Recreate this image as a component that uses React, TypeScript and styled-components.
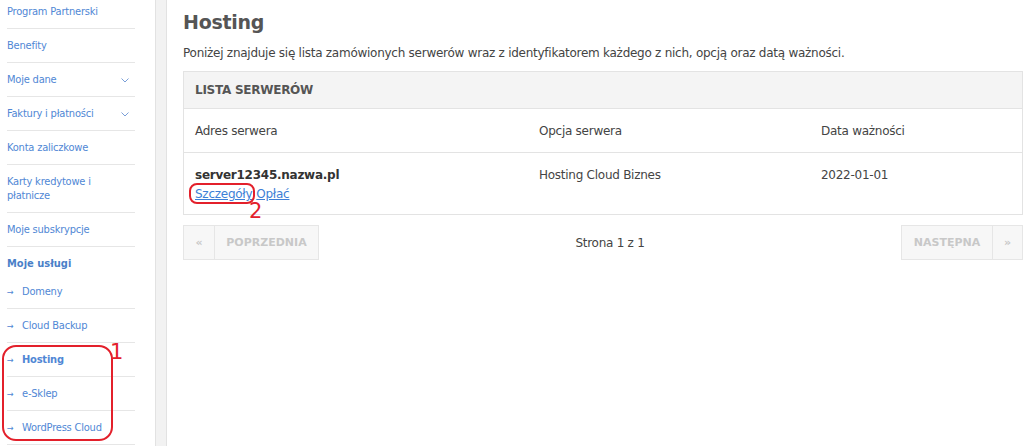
import * as React from 'react'
import styled, { createGlobalStyle } from 'styled-components'

const Global = createGlobalStyle`
  html, body { margin: 0; padding: 0; background: #fff; }
  body { font-family: "DejaVu Sans", Verdana, sans-serif; overflow: hidden; }
`

const Page = styled.div`
  display: flex;
  flex-direction: row;
  height: 446px;
  position: relative;
  overflow: hidden;
`

const Sidebar = styled.nav`
  width: 148px;
  padding-left: 7px;
  flex: none;
`

const MenuList = styled.ul`
  list-style: none;
  margin: -5px 0 0;
  padding: 0;
  width: 128px;
`

const MenuItem = styled.li<{ $bold?: boolean }>`
  display: flex;
  align-items: flex-start;
  justify-content: space-between;
  padding: 10px 0 9px;
  border-bottom: 1px solid #e6e6e6;
  font-family: "DejaVu Sans Condensed", "Liberation Sans", sans-serif;
  font-size: 11px;
  line-height: 14px;
  letter-spacing: -0.2px;
  color: #5087d5;
  font-weight: ${p => (p.$bold ? 700 : 400)};
`

const MenuHeader = styled.li`
  padding: 10px 0 4px;
  font-family: "DejaVu Sans Condensed", "Liberation Sans", sans-serif;
  font-size: 11px;
  line-height: 14px;
  font-weight: 700;
  color: #4a7fc8;
`

const Arrow = styled.span`
  display: inline-block;
  width: 15px;
  font-size: 9px;
  color: #4f86d4;
  font-weight: 400;
`

const Label = styled.span`
  display: flex;
  align-items: flex-start;
`

const Chevron = styled.svg`
  margin: 5px 6px 0 0;
  flex: none;
`

const Strip = styled.div`
  width: 10px;
  flex: none;
  background: #f2f2f2;
  border-left: 1px solid #e2e2e2;
  border-right: 1px solid #e2e2e2;
`

const Main = styled.main`
  flex: 1;
  padding: 10px 5px 0 16px;
  color: #555;
  letter-spacing: -0.26px;
`

const Title = styled.h1`
  margin: 0;
  font-size: 19px;
  line-height: 24px;
  font-weight: 700;
  color: #555;
`

const Intro = styled.p`
  margin: 11px 0 10px;
  font-size: 12px;
  line-height: 16px;
  color: #444;
`

const Box = styled.div`
  border: 1px solid #e3e3e3;
`

const BoxHead = styled.div`
  background: #f4f4f4;
  padding: 10px 11px 10px;
  font-size: 12px;
  line-height: 16px;
  font-weight: 700;
  color: #555;
  border-bottom: 1px solid #e3e3e3;
`

const Row = styled.div<{ $head?: boolean }>`
  display: grid;
  grid-template-columns: 344px 282px 1fr;
  padding: ${p => (p.$head ? '14px 11px 13px' : '14px 11px 12px')};
  font-size: 12px;
  line-height: 16px;
  color: #444;
  border-bottom: ${p => (p.$head ? '1px solid #e3e3e3' : 'none')};
`

const Server = styled.div`
  font-weight: 700;
  color: #333;
`

const Links = styled.div`
  display: flex;
  gap: 4px;
  margin-top: 3px;
`

const Link = styled.a`
  font-size: 12px;
  color: #3d7fd6;
  text-decoration: underline;
`

const Pager = styled.div`
  display: flex;
  justify-content: space-between;
  align-items: center;
  margin-top: 10px;
`

const PagerGroup = styled.div`
  display: flex;
`

const PagerButton = styled.span<{ $w: number }>`
  display: flex;
  align-items: center;
  justify-content: center;
  width: ${p => p.$w}px;
  height: 33px;
  border: 1px solid #e6e6e6;
  background: #f7f7f7;
  color: #c8c8c8;
  font-size: 11px;
  font-weight: 700;
  letter-spacing: 0;
  & + & { border-left: none; }
`

const PageInfo = styled.span`
  font-size: 12px;
  color: #444;
`

const Mark = styled.div`
  position: absolute;
  border: 2px solid #e3202b;
  box-sizing: border-box;
`

const MarkNum = styled.span`
  position: absolute;
  font-family: "DejaVu Sans", sans-serif;
  color: #e3202b;
  font-size: 21px;
  line-height: 21px;
`

const menu: { label: string; chevron?: boolean }[] = [
  { label: 'Program Partnerski' },
  { label: 'Benefity' },
  { label: 'Moje dane', chevron: true },
  { label: 'Faktury i płatności', chevron: true },
  { label: 'Konta zaliczkowe' },
  { label: 'Karty kredytowe i płatnicze' },
  { label: 'Moje subskrypcje' },
]

const services = ['Domeny', 'Cloud Backup', 'Hosting', 'e-Sklep', 'WordPress Cloud']

export default function App() {
  return (
    <Page>
      <Global />
      <Sidebar>
        <MenuList>
          {menu.map(m => (
            <MenuItem key={m.label}>
              <span style={m.label.startsWith('Karty') ? { width: 95 } : undefined}>{m.label}</span>
              {m.chevron && (
                <Chevron width="8" height="5" viewBox="0 0 8 5">
                  <polyline points="0.5,0.5 4,4 7.5,0.5" fill="none" stroke="#7a9fd8" strokeWidth="1" />
                </Chevron>
              )}
            </MenuItem>
          ))}
          <MenuHeader>Moje usługi</MenuHeader>
          {services.map(s => (
            <MenuItem key={s} $bold={s === 'Hosting'}>
              <Label>
                <Arrow>→</Arrow>
                {s}
              </Label>
            </MenuItem>
          ))}
        </MenuList>
      </Sidebar>
      <Strip />
      <Main>
        <Title>Hosting</Title>
        <Intro>
          Poniżej znajduje się lista zamówionych serwerów wraz z identyfikatorem każdego z nich, opcją oraz datą ważności.
        </Intro>
        <Box>
          <BoxHead>LISTA SERWERÓW</BoxHead>
          <Row $head>
            <div>Adres serwera</div>
            <div>Opcja serwera</div>
            <div>Data ważności</div>
          </Row>
          <Row>
            <div>
              <Server>server12345.nazwa.pl</Server>
              <Links>
                <Link>Szczegóły</Link>
                <Link>Opłać</Link>
              </Links>
            </div>
            <div>Hosting Cloud Biznes</div>
            <div>2022-01-01</div>
          </Row>
        </Box>
        <Pager>
          <PagerGroup>
            <PagerButton $w={30}>«</PagerButton>
            <PagerButton $w={103}>POPRZEDNIA</PagerButton>
          </PagerGroup>
          <PageInfo>Strona 1 z 1</PageInfo>
          <PagerGroup>
            <PagerButton $w={90}>NASTĘPNA</PagerButton>
            <PagerButton $w={29}>»</PagerButton>
          </PagerGroup>
        </Pager>
      </Main>
      <Mark style={{ left: 2, top: 345, width: 111, height: 96, borderRadius: 14 }} />
      <MarkNum style={{ left: 110, top: 342 }}>1</MarkNum>
      <Mark style={{ left: 189, top: 183, width: 66, height: 21, borderRadius: 8 }} />
      <MarkNum style={{ left: 249, top: 201 }}>2</MarkNum>
    </Page>
  )
}
